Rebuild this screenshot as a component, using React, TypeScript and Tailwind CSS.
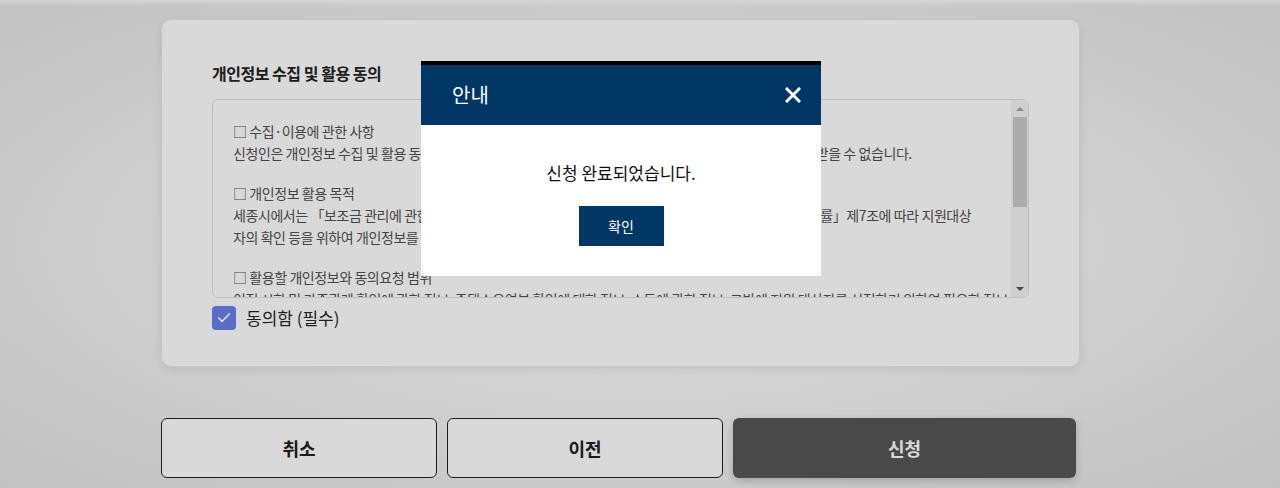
import { Check } from "lucide-react";

const font = "font-['Noto_Sans_CJK_KR','Noto_Sans',sans-serif]";

const terms = [
  [
    "□ 수집·이용에 관한 사항",
    "신청인은 개인정보 수집 및 활용 동의를 거부할 권리가 있으며, 동의를 거부할 경우 지원사업 신청 및 혜택을 받을 수 없습니다.",
  ],
  [
    "□ 개인정보 활용 목적",
    "세종시에서는 「보조금 관리에 관한 법률」 및 「사회보장급여의 이용 · 제공 및 수급권자 발굴 등에 관한 법률」제7조에 따라 지원대상",
    "자의 확인 등을 위하여 개인정보를 수집·이용합니다.",
  ],
  [
    "□ 활용할 개인정보와 동의요청 범위",
    "이전 시한 및 가족관계 확인에 관한 정보, 주택소유여부 확인에 대한 정보, 소득에 관한 정보, 그밖에 지원 대상자를 선정하기 위하여 필요한 정보",
  ],
];

function FakeScrollbar() {
  return (
    <div className="w-[17px] shrink-0 bg-[#f4f4f4] flex flex-col items-center">
      <div className="h-[17px] flex items-center justify-center">
        <div className="w-0 h-0 border-x-[4px] border-x-transparent border-b-[4px] border-b-[#a3a3a3]" />
      </div>
      <div className="w-[14px] h-[90px] bg-[#cbcbcb]" />
      <div className="flex-1" />
      <div className="h-[17px] flex items-center justify-center">
        <div className="w-0 h-0 border-x-[4px] border-x-transparent border-t-[4px] border-t-[#555555]" />
      </div>
    </div>
  );
}

function Modal() {
  return (
    <div className={`fixed left-[421px] top-[61px] w-[400px] bg-white border-t-4 border-black ${font}`}>
      <div className="h-[60px] bg-[#003764] flex items-center justify-between pl-[31px] pr-[20px]">
        <h3 className="text-[20px] text-white leading-none">안내</h3>
        <button className="w-[16px] h-[16px]">
          <svg width="16" height="16" viewBox="0 0 16 16">
            <path d="M2 2L14 14M14 2L2 14" stroke="white" strokeWidth="3" strokeLinecap="square" />
          </svg>
        </button>
      </div>
      <div className="flex flex-col items-center pt-[36px] pb-[30px]">
        <p className="text-[17px] leading-[24px] text-[#111]">신청 완료되었습니다.</p>
        <button className="mt-[21px] w-[85px] h-[40px] bg-[#003764] text-white text-[14px]">확인</button>
      </div>
    </div>
  );
}

export default function App() {
  return (
    <div className={`relative w-full h-[488px] overflow-hidden bg-[radial-gradient(ellipse_at_center,#ffffff_20%,#e4e4e4_100%)] ${font}`}>
      <div className="h-[6px] bg-[linear-gradient(to_bottom,rgba(255,255,255,0.9),rgba(255,255,255,0))]" />
      <div className="pl-[161px]">
        <div className="w-[919px] mt-[13px] h-[348px] rounded-[10px] bg-white border border-[#e8e8e8] shadow-[0_3px_10px_rgba(0,0,0,0.08)] pt-[43px] pl-[50px]">
          <h2 className="text-[16px] leading-[20px] font-bold text-[#222] tracking-[-0.03em]">개인정보 수집 및 활용 동의</h2>
          <div className="mt-[16px] w-[817px] h-[199px] rounded-[6px] border border-[#e2e2e2] flex overflow-hidden">
            <div className="flex-1 pt-[20px] pl-[20px] text-[14px] leading-[22px] text-[#505050] tracking-[-0.03em] flex flex-col gap-[18px] overflow-hidden">
              {terms.map((para, i) => (
                <div key={i}>
                  {para.map((line, j) => (
                    <div key={j} className="whitespace-nowrap">{line}</div>
                  ))}
                </div>
              ))}
            </div>
            <FakeScrollbar />
          </div>
          <label className="mt-[7px] flex items-center gap-[10px]">
            <span className="w-[24px] h-[24px] rounded-[4px] bg-[#6b82ea] flex items-center justify-center">
              <Check className="w-[16px] h-[16px] text-white" strokeWidth={2.5} />
            </span>
            <span className="text-[17px] text-[#262626]">동의함 (필수)</span>
          </label>
        </div>
        <div className="mt-[51px] flex gap-[10px]">
          <button className="w-[276px] h-[60px] rounded-[6px] border border-[#222] bg-white text-[18px] font-bold text-[#222]">취소</button>
          <button className="w-[276px] h-[60px] rounded-[6px] border border-[#222] bg-white text-[18px] font-bold text-[#222]">이전</button>
          <button className="w-[343px] h-[60px] rounded-[6px] bg-[#565656] text-[18px] font-bold text-white shadow-[0_3px_8px_rgba(0,0,0,0.2)]">신청</button>
        </div>
      </div>
      <div className="fixed inset-0 bg-black/15" />
      <Modal />
    </div>
  );
}
